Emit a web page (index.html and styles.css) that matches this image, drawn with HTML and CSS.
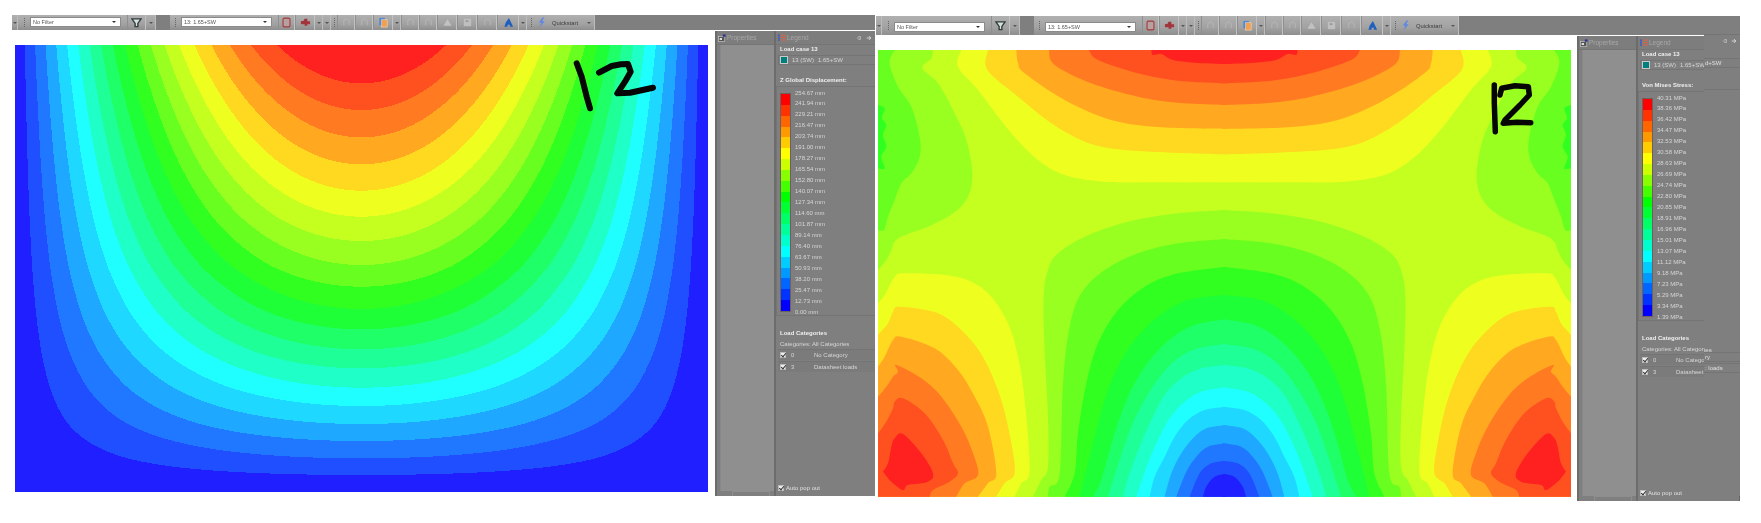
FILE: index.html
```html
<!DOCTYPE html>
<html lang="en">
<head>
<meta charset="utf-8">
<title>Plate results</title>
<link rel="stylesheet" href="styles.css">
</head>
<body>
<svg class="defs" width="0" height="0" aria-hidden="true">
  <symbol id="i-funnel" viewBox="0 0 12 12"><path d="M1 2h10L7.500 7v3.500h-3V7z" fill="#d8e0d8" stroke="#2d3d3d" stroke-width="1.500"/></symbol>
  <symbol id="i-frame" viewBox="0 0 12 12"><rect x="2.200" y="1.200" width="7.600" height="9.600" rx="1.500" fill="#b9a0a0" stroke="#a33a3a" stroke-width="1.200"/></symbol>
  <symbol id="i-truck" viewBox="0 0 12 12"><path d="M1 4.500l3-.5 1-2h3v2.500h3V8H8v1.500H5V8H1z" fill="#a3343c"/></symbol>
  <symbol id="i-copy" viewBox="0 0 12 12"><rect x="1.500" y="1" width="6" height="8" fill="#4f86d8"/><rect x="4" y="3" width="6" height="8" fill="#f0a050" stroke="#f7e0c0" stroke-width=".6"/></symbol>
  <symbol id="i-tri" viewBox="0 0 12 12"><path d="M6 2.500l4.500 7h-9z" fill="#c2c2c2"/></symbol>
  <symbol id="i-sq" viewBox="0 0 12 12"><rect x="2" y="2" width="8" height="8" fill="#bfbfbf"/><rect x="4" y="3.500" width="3" height="2" fill="#9a9a9a"/></symbol>
  <symbol id="i-faint" viewBox="0 0 12 12"><path d="M3 9V4l3-2 3 2v5" fill="none" stroke="#b4b4b4" stroke-width="1.100"/></symbol>
  <symbol id="i-house" viewBox="0 0 12 12"><path d="M6.500 1L11 10.500H7.500V8.500H5V10.500H1.500L3 6z" fill="#1f5fc0"/></symbol>
  <symbol id="i-bolt" viewBox="0 0 12 14"><path d="M7.500 .5L2.500 7H6L3.500 13.500 10 5.500H6.500L9.500 .5z" fill="#5a86e8"/></symbol>
  <symbol id="i-props" viewBox="0 0 10 10"><rect x=".5" y="3" width="8" height="6.500" fill="#555" stroke="#ddd" stroke-width=".7"/><rect x="6" y=".5" width="3.500" height="3" fill="#33358a"/><rect x="2" y="5" width="3" height="2.500" fill="#ddd"/></symbol>
  <symbol id="i-legend" viewBox="0 0 10 10"><path d="M0 1.500h2.500M0 4.500h2.500M0 7.500h2.500" stroke="#3a5ec0" stroke-width="2"/><path d="M3 1.500h7" stroke="#c86a50" stroke-width="1.600"/><path d="M3 4.500h7" stroke="#c86a50" stroke-width="1.600"/><path d="M3 7.500h7" stroke="#c86a50" stroke-width="1.600"/></symbol>
  <symbol id="i-pin" viewBox="0 0 8 8"><path d="M1 4h4M3 2h3v4H3" fill="none" stroke="#bdbdbd" stroke-width="1"/></symbol>
  <symbol id="i-arrow" viewBox="0 0 8 8"><path d="M1 4h5M4 1.500L6.500 4 4 6.500" fill="none" stroke="#dedede" stroke-width="1.200"/></symbol>
</svg>

<section class="shot shot-a">
  <div class="toolbar">
    <div class="tools">
      <span class="tick w6"></span><span class="grip w12"></span>
      <span class="select">No Filter</span><span class="slot w6"></span>
      <span class="tool w19"><svg class="ico"><use href="#i-funnel"/></svg></span><span class="tick w10"></span>
      <span class="dark w14"></span><span class="grip w11"></span>
      <span class="select">13: 1.65+SW</span><span class="slot w6"></span>
      <span class="tool w17"><svg class="ico"><use href="#i-frame"/></svg></span>
      <span class="tool w20"><svg class="ico"><use href="#i-truck"/></svg></span>
      <span class="tick w8"></span><span class="tick w8"></span><span class="grip w6"></span>
      <span class="tool w18"><svg class="ico"><use href="#i-faint"/></svg></span>
      <span class="tool w18"><svg class="ico"><use href="#i-faint"/></svg></span>
      <span class="tool w20"><svg class="ico"><use href="#i-copy"/></svg></span><span class="tick w8"></span>
      <span class="tool w18"><svg class="ico"><use href="#i-faint"/></svg></span>
      <span class="tool w18"><svg class="ico"><use href="#i-faint"/></svg></span>
      <span class="tool w20"><svg class="ico"><use href="#i-tri"/></svg></span>
      <span class="tool w20"><svg class="ico"><use href="#i-sq"/></svg></span>
      <span class="tool w20"><svg class="ico"><use href="#i-faint"/></svg></span>
      <span class="tool w22"><svg class="ico"><use href="#i-house"/></svg></span>
      <span class="tick w8"></span><span class="grip w8"></span>
      <span class="tool-plain w12"><svg class="ico"><use href="#i-bolt"/></svg></span>
      <span class="quick">Quickstart</span><span class="tick w12"></span>
    </div>
  </div>
  <div class="main">
    <div class="plot-area">
      <div class="plot">
        <canvas id="plot-z" width="693" height="447"></canvas>
        <svg class="ink" viewBox="0 0 693 447" aria-label="12"><path d="M561.700 18.300L566.700 31.700 571.700 51.700 575 63.300"/><path d="M584 27.700L596.700 21 606 19.300 613 19 615.700 26.700 610 36.700 602.300 48.300 615 47.700 638 42.700"/></svg>
      </div>
    </div>
    <aside class="panels">
      <div class="dock">
        <div class="head"><svg class="ico-s"><use href="#i-props"/></svg><span class="head-text">Properties</span></div>
        <div class="dock-body"></div>
        <div class="dock-foot"><span class="dock-tab"></span></div>
      </div>
      <div class="legend">
        <div class="head legend-head"><svg class="ico-s"><use href="#i-legend"/></svg><span class="head-text">Legend</span><svg class="ico-p push"><use href="#i-pin"/></svg><svg class="ico-p"><use href="#i-arrow"/></svg></div>
        <div class="title">Load case 13</div>
        <div class="lc-row"><span class="swatch"></span><span class="lc-a">13 (SW)</span><span>1.65+SW</span></div>
        <div class="title title-2">Z Global Displacement:</div>
        <div class="scale-box">
          <div class="scale-bar"></div>
          <ul class="labels">
            <li>254.67 mm</li><li>241.94 mm</li><li>229.21 mm</li><li>216.47 mm</li><li>203.74 mm</li><li>191.00 mm</li><li>178.27 mm</li><li>165.54 mm</li><li>152.80 mm</li><li>140.07 mm</li><li>127.34 mm</li><li>114.60 mm</li><li>101.87 mm</li><li>89.14 mm</li><li>76.40 mm</li><li>63.67 mm</li><li>50.93 mm</li><li>38.20 mm</li><li>25.47 mm</li><li>12.73 mm</li><li>0.00 mm</li>
          </ul>
        </div>
        <div class="title title-3">Load Categories</div>
        <div class="cats">Categories: All Categories</div>
        <div class="cat-row"><span class="check"></span><span class="cat-n">0</span><span>No Category</span></div>
        <div class="cat-row"><span class="check"></span><span class="cat-n">3</span><span>Datasheet loads</span></div>
        <div class="auto"><span class="check"></span><span>Auto pop out</span></div>
      </div>
    </aside>
  </div>
</section>

<section class="shot shot-b">
  <div class="toolbar">
    <div class="tools">
      <span class="tick w6"></span><span class="grip w12"></span>
      <span class="select">No Filter</span><span class="slot w6"></span>
      <span class="tool w19"><svg class="ico"><use href="#i-funnel"/></svg></span><span class="tick w10"></span>
      <span class="dark w14"></span><span class="grip w11"></span>
      <span class="select">13: 1.65+SW</span><span class="slot w6"></span>
      <span class="tool w17"><svg class="ico"><use href="#i-frame"/></svg></span>
      <span class="tool w20"><svg class="ico"><use href="#i-truck"/></svg></span>
      <span class="tick w8"></span><span class="tick w8"></span><span class="grip w6"></span>
      <span class="tool w18"><svg class="ico"><use href="#i-faint"/></svg></span>
      <span class="tool w18"><svg class="ico"><use href="#i-faint"/></svg></span>
      <span class="tool w20"><svg class="ico"><use href="#i-copy"/></svg></span><span class="tick w8"></span>
      <span class="tool w18"><svg class="ico"><use href="#i-faint"/></svg></span>
      <span class="tool w18"><svg class="ico"><use href="#i-faint"/></svg></span>
      <span class="tool w20"><svg class="ico"><use href="#i-tri"/></svg></span>
      <span class="tool w20"><svg class="ico"><use href="#i-sq"/></svg></span>
      <span class="tool w20"><svg class="ico"><use href="#i-faint"/></svg></span>
      <span class="tool w22"><svg class="ico"><use href="#i-house"/></svg></span>
      <span class="tick w8"></span><span class="grip w8"></span>
      <span class="tool-plain w12"><svg class="ico"><use href="#i-bolt"/></svg></span>
      <span class="quick">Quickstart</span><span class="tick w12"></span>
    </div>
  </div>
  <div class="main">
    <div class="plot-area">
      <div class="plot">
        <canvas id="plot-vm" width="693" height="447"></canvas>
        <svg class="ink ink-thin" viewBox="0 0 693 447" aria-label="12"><path d="M616.300 35L616.300 53 617.300 81.700"/><path d="M622 45L623.700 38.300 637 35.700 650.300 36.700 651.300 45 642 55 627 70 625.300 73.300 638.700 72.300 652.700 72.700"/></svg>
      </div>
    </div>
    <aside class="panels">
      <div class="dock">
        <div class="head"><svg class="ico-s"><use href="#i-props"/></svg><span class="head-text">Properties</span></div>
        <div class="dock-body"></div>
        <div class="dock-foot"><span class="dock-tab"></span></div>
      </div>
      <div class="legend">
        <div class="head legend-head"><svg class="ico-s"><use href="#i-legend"/></svg><span class="head-text">Legend</span></div>
        <div class="title">Load case 13</div>
        <div class="lc-row"><span class="swatch"></span><span class="lc-a">13 (SW)</span><span>1.65+SW</span></div>
        <div class="title title-2">Von Mises Stress:</div>
        <div class="scale-box">
          <div class="scale-bar"></div>
          <ul class="labels">
            <li>40.31 MPa</li><li>38.36 MPa</li><li>36.42 MPa</li><li>34.47 MPa</li><li>32.53 MPa</li><li>30.58 MPa</li><li>28.63 MPa</li><li>26.69 MPa</li><li>24.74 MPa</li><li>22.80 MPa</li><li>20.85 MPa</li><li>18.91 MPa</li><li>16.96 MPa</li><li>15.01 MPa</li><li>13.07 MPa</li><li>11.12 MPa</li><li>9.18 MPa</li><li>7.23 MPa</li><li>5.29 MPa</li><li>3.34 MPa</li><li>1.39 MPa</li>
          </ul>
        </div>
        <div class="title title-3">Load Categories</div>
        <div class="cats">Categories: All Categor</div>
        <div class="cat-row"><span class="check"></span><span class="cat-n">0</span><span>No Catego</span></div>
        <div class="cat-row"><span class="check"></span><span class="cat-n">3</span><span>Datasheet</span></div>
        <div class="auto"><span class="check"></span><span>Auto pop out</span></div>
      </div>
      <div class="patch">
        <div class="patch-head"><svg class="ico-p"><use href="#i-pin"/></svg><svg class="ico-p"><use href="#i-arrow"/></svg></div>
        <div class="patch-row patch-lc">d+SW</div>
        <div class="patch-line"></div>
        <div class="patch-cats">ies</div>
        <div class="patch-row patch-r1">ry</div>
        <div class="patch-row patch-r2">: loads</div>
      </div>
    </aside>
  </div>
</section>
<script src="plots.js"></script>
</body>
</html>
```
FILE: styles.css
```css
* { box-sizing: border-box; }
html, body { margin: 0; padding: 0; }
body {
  position: relative;
  width: 1761px;
  height: 523px;
  overflow: hidden;
  background: #fff;
  font-family: "Liberation Sans", Arial, sans-serif;
  font-size: 6px;
  color: #d6d6d6;
}
.defs { position: absolute; }

/* each pasted screenshot sits on a free canvas */
.shot { position: absolute; display: flex; flex-direction: column; filter: blur(.4px); }
.shot-a { left: 12px; top: 15px; width: 863px; }
.shot-b { left: 876px; top: 16px; width: 864px; }

.toolbar { display: flex; background: #7f7f7f; height: 15px; }
.shot-b .toolbar { height: 19px; }
.tools {
  display: flex;
  align-items: stretch;
  width: 583px;
  background: linear-gradient(#b0b0b0, #a2a2a2 60%, #8e8e8e);
}
.tools > span { display: flex; align-items: center; justify-content: center; flex: none; }
.w6 { width: 6px; } .w8 { width: 8px; } .w10 { width: 10px; } .w11 { width: 11px; }
.w12 { width: 12px; } .w14 { width: 14px; } .w17 { width: 17px; } .w18 { width: 18px; }
.w19 { width: 19px; } .w20 { width: 20px; } .w22 { width: 22px; }
.tick { border-right: 1px solid #bcbcbc; }
.tick::after {
  content: "";
  border: 2px solid transparent;
  border-top: 2px solid #555;
  border-bottom: 0;
}
.grip { position: relative; }
.grip::after { content: ""; height: 9px; border-left: 1px dotted #666; }
.dark { background: #7f7f7f; }
.select {
  position: relative;
  justify-content: flex-start !important;
  width: 91px;
  height: 10px;
  margin-top: 2px;
  padding-left: 2px;
  background: #fff;
  border: 1px solid #8a8a8a;
  color: #555;
  font-size: 5.500px;
  line-height: 8px;
}
.shot-b .select { margin-top: 6px; }
.select::after {
  content: "";
  position: absolute;
  right: 4px;
  top: 3px;
  border: 2px solid transparent;
  border-top: 2.500px solid #333;
  border-bottom: 0;
}
.tool { border-right: 1px solid #c2c2c2; border-left: 1px solid #8f8f8f; }
.ico { width: 11px; height: 11px; }
.quick { width: 36px; color: #3c3c3c; font-size: 5.800px; white-space: nowrap; }

.main { display: flex; }
.plot-area { flex: 1; padding: 15px 0 0 3px; }
.shot-b .plot-area { padding-left: 2px; }
.plot { position: relative; width: 693px; height: 447px; }
.plot canvas { display: block; }
.ink { position: absolute; inset: 0; width: 693px; height: 447px; }
.ink path { fill: none; stroke: #060606; stroke-width: 6px; stroke-linecap: round; stroke-linejoin: round; }
.ink-thin path { stroke-width: 5.500px; }

.panels {
  position: relative;
  display: flex;
  flex: none;
  width: 160px;
  height: 465px;
  margin-top: 1px;
  background: #7f7f7f;
  border-left: 2px solid #6c6c6c;
}
.shot-b .panels { width: 163px; border-right: 1px solid #666; }
.dock { display: flex; flex-direction: column; width: 59px; border-right: 2px solid #6c6c6c; }
.head {
  display: flex;
  align-items: center;
  gap: 1px;
  height: 14px;
  padding-left: 1px;
  background: #7d7d7d;
  border-bottom: 1px solid #757575;
  color: #a8a8a8;
}
.head-text { font-size: 6.500px; }
.ico-s { width: 8px; height: 8px; }
.ico-p { width: 6px; height: 6px; margin-right: 3px; }
.push { margin-left: auto; }
.dock-body { flex: 1; margin-left: 3px; background: #8f8f8f; border-left: 1px solid #888; }
.dock-foot { display: flex; justify-content: flex-end; height: 5px; }
.dock-tab { width: 38px; margin-right: 4px; border-top: 1px solid #8e8e8e; border-left: 1px solid #8e8e8e; border-right: 1px solid #8e8e8e; }

.legend { position: relative; display: flex; flex-direction: column; flex: 1; }
.legend-head { padding-left: 2px; }
.title { height: 8px; margin-left: 4px; margin-bottom: 2px; color: #efefef; font-weight: bold; line-height: 8px; white-space: nowrap; }
.lc-row {
  display: flex;
  align-items: center;
  height: 10px;
  margin: 0 0 11px 2px;
  border: 1px solid #747474;
  border-right: 0;
}
.swatch { width: 8px; height: 8px; margin: 0 4px 0 1px; background: #007f7f; border: 1px solid #c9c9c9; }
.lc-a { width: 26px; }
.title-2 { margin-bottom: 2px; }
.scale-box {
  display: flex;
  flex: none;
  height: 230px;
  padding: 6px 0 0 3px;
  border-top: 1px solid #747474;
  border-bottom: 1px solid #747474;
  border-left: 1px solid #747474;
}
.scale-bar {
  flex: none;
  width: 11px;
  height: 219px;
  border: 1px solid #6f5f5f;
  background: linear-gradient(#f00 0 5%, #f30 5% 10%, #f60 10% 15%, #f90 15% 20%, #fc0 20% 25%, #ff0 25% 30%,
    #cf0 30% 35%, #8f0 35% 40%, #4f0 40% 45%, #0f0 45% 50%, #0f3 50% 55%, #0f6 55% 60%, #0f9 60% 65%,
    #0fc 65% 70%, #0ff 70% 75%, #0cf 75% 80%, #09f 80% 85%, #06f 85% 90%, #03f 90% 95%, #00f 95% 100%);
}
.labels { flex: 1; margin: -5.500px 0 0 4px; padding: 0; list-style: none; line-height: 10.950px; white-space: nowrap; }
.title-3 { margin-top: 13px; margin-bottom: 3px; }
.cats { height: 8px; margin: 0 0 1px 4px; line-height: 8px; white-space: nowrap; }
.cat-row {
  display: flex;
  align-items: center;
  height: 11px;
  margin: 0 0 1px 2px;
  padding-left: 2px;
  background: #7b7b7b;
  border-top: 1px solid #747474;
  white-space: nowrap;
}
.check {
  position: relative;
  flex: none;
  width: 6px;
  height: 6px;
  background: #eee;
  border: 1px solid #bbb;
}
.check::after {
  content: "";
  position: absolute;
  left: 1px;
  top: -1px;
  width: 2px;
  height: 4px;
  border-right: 1px solid #333;
  border-bottom: 1px solid #333;
  transform: rotate(40deg);
}
.cat-n { width: 23px; margin-left: 5px; }
.auto { display: flex; align-items: center; gap: 2px; height: 8px; margin: auto 0 4px 2px; color: #e0e0e0; white-space: nowrap; }

/* the pasted strip over the right panel of the second screenshot */
.patch {
  position: absolute;
  left: 125px;
  top: -2px;
  width: 36px;
  height: 462px;
  background: #7f7f7f;
  border-top: 1px solid #747474;
  color: #e0e0e0;
}
.patch-head { display: flex; justify-content: flex-end; align-items: center; height: 12px; padding-right: 0; }
.patch-row { position: absolute; left: 0; width: 36px; height: 10px; padding-left: 1px; line-height: 9px; border-top: 1px solid #747474; border-bottom: 1px solid #747474; white-space: nowrap; }
.patch-lc { top: 23px; }
.patch-line { position: absolute; left: 0; top: 54px; width: 36px; border-top: 1px solid #747474; }
.patch-cats { position: absolute; left: 0; top: 311px; line-height: 8px; }
.patch-r1 { top: 317px; }
.patch-r2 { top: 328px; }
```
FILE: plots.js
```js
// Contour bands of the two plate results.
var BANDS = ['#1f1fff','#1f4fff','#1f78ff','#1fa8ff','#1fd8ff','#1fffff','#1fffc8','#1fff98','#1fff68','#1fff38',
             '#30ff20','#68ff20','#98ff20','#c4ff20','#eeff20','#ffd820','#ffa820','#ff7a20','#ff5020','#ff2020'];

function rgb(hex) {
  return [parseInt(hex.substr(1, 2), 16), parseInt(hex.substr(3, 2), 16), parseInt(hex.substr(5, 2), 16)];
}

function drawDisplacement(canvas) {
  var yTable = [1.022,0.95,0.9,0.85,0.8,0.75,0.7,0.65,0.6,0.55,0.5,0.45,0.4,0.35,0.3,0.25,0.2,0.15,0.1,0.05,0];
  var yPos = [0,115,195,277,358,437,515,588,660,725,792,853,913,970,1028,1083,1137,1188,1240,1290,1340];
  function profile(z) {
    for (var i = 1; i < yPos.length; i++) {
      if (z <= yPos[i]) {
        return yTable[i - 1] + (yTable[i] - yTable[i - 1]) * (z - yPos[i - 1]) / (yPos[i] - yPos[i - 1]);
      }
    }
    return 0;
  }
  var w = canvas.width, h = canvas.height, ctx = canvas.getContext('2d');
  var img = ctx.createImageData(w, h), cols = BANDS.map(rgb);
  for (var y = 0; y < h; y++) {
    var Y = profile((y + 0.5) * 3);
    for (var x = 0; x < w; x++) {
      var X = Math.pow(Math.sin(Math.PI * (x + 0.5) / w), 0.97);
      var k = Math.min(19, Math.floor(X * Y * 20));
      var c = cols[k], p = (y * w + x) * 4;
      img.data[p] = c[0]; img.data[p + 1] = c[1]; img.data[p + 2] = c[2]; img.data[p + 3] = 255;
    }
  }
  ctx.putImageData(img, 0, 0);
}

// Stress contours traced on the left half, in units of 1/3 px; each region is
// [band, smooth curve, straight closing corners]. The right half is the mirror.
var REGIONS = [
  [12, [[165,0],[160,25],[133,55],[180,100],[230,190],[265,270],[283,370],[270,440],[225,490],[150,530],[80,555],[50,575],[40,600],[25,630],[0,660]], [[0,0]]],
  [11, [[50,0],[35,40],[60,110],[100,170],[125,260],[125,320],[100,370],[70,400],[50,450],[30,500],[18,540],[0,540]], [[0,0]]],
  [10, [[0,165],[20,175],[12,205],[25,225],[15,255],[25,290],[10,320],[20,355],[0,355]], []],
  [14, [[250,0],[240,50],[300,120],[400,250],[480,330],[560,375],[680,395],[850,397],[1046,397]], [[1046,0]]],
  [15, [[330,0],[328,60],[420,140],[520,220],[620,275],[720,298],[880,308],[1046,313]], [[1046,0]]],
  [16, [[415,0],[420,40],[440,70],[560,150],[700,210],[850,232],[1046,237]], [[1046,0]]],
  [17, [[513,0],[530,45],[640,100],[780,140],[900,158],[1046,165]], [[1046,0]]],
  [18, [[633,0],[660,30],[780,70],[900,92],[1046,100]], [[1046,0]]],
  [19, [[820,0],[825,15],[850,12],[885,30],[950,38],[1046,42]], [[1046,0]]],
  [14, [[0,760],[20,735],[50,680],[80,670],[200,675],[280,695],[340,740],[390,820],[420,920],[440,1050],[455,1260],[430,1300],[410,1340]], [[0,1340]]],
  [15, [[0,855],[30,820],[45,785],[65,770],[180,790],[260,850],[320,930],[370,1050],[400,1180],[410,1270],[380,1300],[355,1340]], [[0,1340]]],
  [16, [[0,950],[20,920],[45,870],[70,860],[170,895],[240,960],[290,1040],[330,1130],[355,1270],[330,1300],[300,1340]], [[0,1340]]],
  [17, [[0,1040],[25,1010],[45,980],[60,965],[55,945],[130,985],[190,1040],[250,1130],[285,1210],[300,1275],[260,1300],[235,1340]], [[0,1340]]],
  [18, [[0,1150],[25,1115],[45,1075],[50,1055],[75,1045],[140,1090],[195,1170],[225,1240],[240,1270],[215,1295],[165,1320],[155,1340]], [[0,1340]]],
  [19, [[15,1265],[30,1240],[40,1190],[50,1165],[75,1152],[130,1210],[165,1270],[150,1295],[90,1305],[75,1320],[40,1295],[15,1265]], []],
  [12, [[1046,480],[900,490],[750,515],[620,560],[540,610],[510,660],[497,740],[500,900],[510,1100],[510,1250],[490,1290],[465,1340]], [[1046,1340]]],
  [11, [[1046,567],[900,580],[780,610],[680,660],[610,730],[575,830],[555,1000],[545,1270],[515,1310],[510,1340]], [[1046,1340]]],
  [10, [[1046,650],[900,670],[800,710],[720,780],[660,880],[625,1000],[600,1150],[590,1270],[560,1340]], [[1046,1340]]],
  [9,  [[1046,735],[930,750],[840,800],[770,870],[725,940],[690,1020],[660,1120],[630,1240],[605,1340]], [[1046,1340]]],
  [8,  [[1046,808],[950,825],[880,865],[820,925],[770,1000],[730,1090],[695,1200],[670,1290],[645,1340]], [[1046,1340]]],
  [7,  [[1046,882],[960,895],[900,925],[850,975],[800,1050],[760,1130],[725,1230],[690,1340]], [[1046,1340]]],
  [6,  [[1046,945],[970,955],[910,985],[860,1035],[820,1110],[785,1190],[755,1270],[735,1340]], [[1046,1340]]],
  [5,  [[1046,1012],[970,1025],[920,1055],[875,1105],[840,1170],[810,1240],[775,1340]], [[1046,1340]]],
  [4,  [[1046,1070],[980,1080],[930,1110],[890,1160],[860,1220],[830,1280],[815,1340]], [[1046,1340]]],
  [3,  [[1046,1125],[985,1135],[945,1165],[910,1210],[880,1270],[860,1340]], [[1046,1340]]],
  [2,  [[1046,1180],[990,1190],[955,1220],[925,1265],[895,1340]], [[1046,1340]]],
  [1,  [[1046,1232],[1000,1240],[965,1270],[935,1340]], [[1046,1340]]],
  [0,  [[1046,1272],[1010,1280],[985,1310],[975,1340]], [[1046,1340]]]
];

function tracePath(ctx, pts, corners) {
  ctx.beginPath();
  ctx.moveTo(pts[0][0] / 3, pts[0][1] / 3);
  for (var i = 0; i < pts.length - 1; i++) {
    var p0 = pts[i - 1] || pts[i], p1 = pts[i], p2 = pts[i + 1], p3 = pts[i + 2] || p2;
    ctx.bezierCurveTo(
      (p1[0] + (p2[0] - p0[0]) / 6) / 3, (p1[1] + (p2[1] - p0[1]) / 6) / 3,
      (p2[0] - (p3[0] - p1[0]) / 6) / 3, (p2[1] - (p3[1] - p1[1]) / 6) / 3,
      p2[0] / 3, p2[1] / 3);
  }
  corners.forEach(function (c) { ctx.lineTo(c[0] / 3, c[1] / 3); });
  ctx.closePath();
  ctx.fill();
}

function drawStress(canvas) {
  var ctx = canvas.getContext('2d'), w = canvas.width, h = canvas.height;
  ctx.fillStyle = BANDS[13];
  ctx.fillRect(0, 0, w, h);
  REGIONS.forEach(function (r) {
    ctx.fillStyle = BANDS[r[0]];
    tracePath(ctx, r[1], r[2]);
    ctx.save();
    ctx.translate(w, 0);
    ctx.scale(-1, 1);
    tracePath(ctx, r[1], r[2]);
    ctx.restore();
  });
}

drawDisplacement(document.getElementById('plot-z'));
drawStress(document.getElementById('plot-vm'));
```
